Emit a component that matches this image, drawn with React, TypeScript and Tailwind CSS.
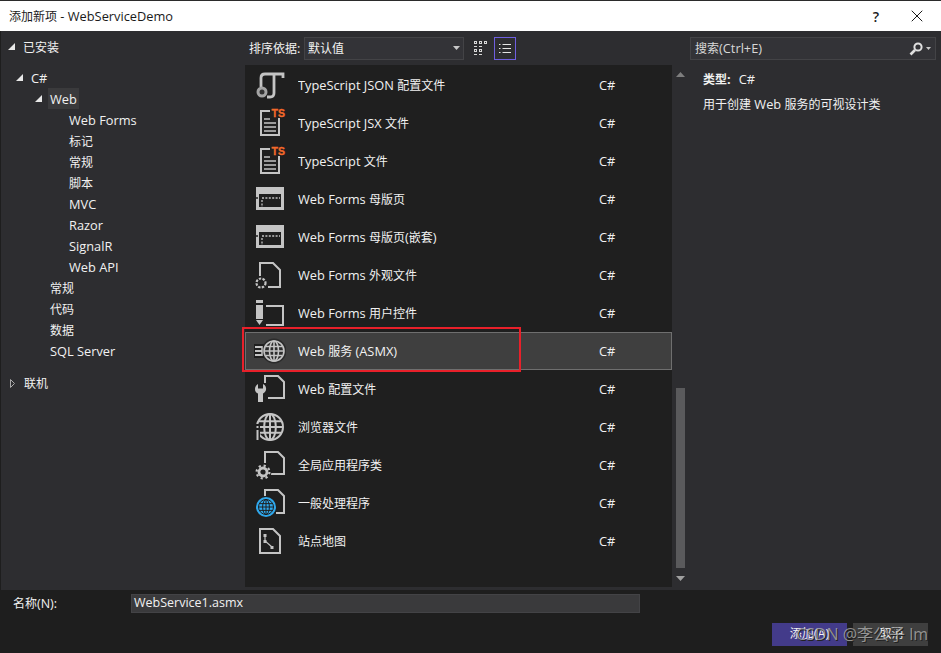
import type { ReactNode } from "react";
import { X } from "lucide-react";

const FONT = "font-['Open_Sans','Noto_Sans_CJK_SC',sans-serif]";
const GRAY = "#c4c4c4";
const BG = "#1f1f1f";

// Latin runs sit a little larger than CJK runs in the original dialog font
function Label({ text }: { text: string }) {
  return (
    <>
      {text.split(/([\u3000-\u9fff]+)/).map((run, i) =>
        /[\u3000-\u9fff]/.test(run) ? (
          <span key={i} className="text-[12px]">
            {run}
          </span>
        ) : (
          <span key={i}>{run}</span>
        ),
      )}
    </>
  );
}

function Icon({ children }: { children: ReactNode }) {
  return (
    <svg width="32" height="38" viewBox="0 0 32 38" fill="none" className="shrink-0">
      {children}
    </svg>
  );
}

function TsDoc() {
  return (
    <Icon>
      <path d="M16 7H7V31H25V14" stroke={GRAY} strokeWidth="2" />
      <path d="M10 15H16M10 19H22M10 23H22M10 27H22" stroke={GRAY} strokeWidth="1.6" />
      <text x="17.500" y="13" fontSize="10.500" fontWeight="700" fill="#f4692a" stroke="#f4692a" strokeWidth="0.300" fontFamily="Liberation Sans, sans-serif">
        TS
      </text>
    </Icon>
  );
}

function MasterPage() {
  return (
    <Icon>
      <rect x="2" y="7" width="28" height="23" fill={GRAY} />
      <rect x="5" y="14" width="22" height="13" fill={BG} />
      <path d="M8 18H26" stroke={GRAY} strokeWidth="1.300" strokeDasharray="2 1.400" />
      <path d="M2 18H6" stroke={BG} strokeWidth="1.300" strokeDasharray="2 1.400" />
      <path d="M8 20V27" stroke={GRAY} strokeWidth="1.300" strokeDasharray="2 1.400" />
    </Icon>
  );
}

function Globe({ cx, cy, r, color = GRAY, sw = 1.6 }: { cx: number; cy: number; r: number; color?: string; sw?: number }) {
  return (
    <g stroke={color} strokeWidth={sw}>
      <circle cx={cx} cy={cy} r={r} />
      <ellipse cx={cx} cy={cy} rx={r * 0.45} ry={r} />
      <path d={`M${cx} ${cy - r}V${cy + r}M${cx - r} ${cy}H${cx + r}M${cx - r * 0.86} ${cy - r * 0.45}H${cx + r * 0.86}M${cx - r * 0.86} ${cy + r * 0.45}H${cx + r * 0.86}`} />
    </g>
  );
}

function Gear({ cx, cy }: { cx: number; cy: number }) {
  return (
    <g>
      <circle cx={cx} cy={cy} r="8.500" fill={BG} />
      <circle cx={cx} cy={cy} r="4" stroke={GRAY} strokeWidth="2.800" />
      <circle cx={cx} cy={cy} r="6.400" stroke={GRAY} strokeWidth="2.200" strokeDasharray="2.200 2.800" />
    </g>
  );
}

const ICONS: Record<string, ReactNode> = {
  json: (
    <Icon>
      <path d="M7 21V12Q7 8 11 8H29V12" stroke={GRAY} strokeWidth="2.800" />
      <path d="M20 8V27Q20 31 16 31H13" stroke={GRAY} strokeWidth="2.800" />
      <circle cx="8" cy="26" r="4" stroke="#a4a4a4" strokeWidth="3" fill="#333" />
    </Icon>
  ),
  ts: <TsDoc />,
  master: <MasterPage />,
  skin: (
    <Icon>
      <path d="M6 20V7H19L26 14V31H14" stroke={GRAY} strokeWidth="2" />
      <circle cx="7" cy="27" r="4.500" stroke={GRAY} strokeWidth="2.200" strokeDasharray="2.400 1.300" />
    </Icon>
  ),
  control: (
    <Icon>
      <path d="M12 12H29V31H12" stroke={GRAY} strokeWidth="2" />
      <rect x="2" y="6" width="7" height="3" fill={GRAY} />
      <rect x="2" y="11" width="7" height="14" fill={GRAY} />
      <path d="M2 26H9L5.500 31Z" fill={GRAY} />
    </Icon>
  ),
  service: (
    <Icon>
      <circle cx="20" cy="19" r="12.500" fill="#2b2b2b" />
      <rect x="0" y="12" width="10" height="14" fill="#1f1f1f" />
      <path d="M1 15H8M1 19H8M1 23H8" stroke={GRAY} strokeWidth="2" />
      <path d="M8 14V24" stroke={GRAY} strokeWidth="1.500" />
      <Globe cx={20} cy={19} r={10} />
    </Icon>
  ),
  config: (
    <Icon>
      <path d="M11 13V6H24L30 12V28H14" stroke={GRAY} strokeWidth="2" />
      <path d="M4 14V18.500H9V14C11.500 15 12.500 17.500 12 20C11.500 22 10 23 9 23.500V32H4V23.500C2.500 23 0.800 21.500 1 19C1 17 2 15 4 14Z" fill={GRAY} />
    </Icon>
  ),
  browser: (
    <Icon>
      <Globe cx={16} cy={19} r={13} sw={2} />
      <rect x="0" y="16" width="6" height="18" fill={BG} />
      <rect x="2.500" y="18" width="2" height="2" fill={GRAY} />
      <rect x="2.500" y="22" width="2" height="10" fill={GRAY} />
    </Icon>
  ),
  gear: (
    <Icon>
      <path d="M11 17V6H24L30 12V28H16" stroke={GRAY} strokeWidth="2" />
      <Gear cx={9} cy={26} />
    </Icon>
  ),
  handler: (
    <Icon>
      <path d="M11 12V6H24L30 12V29H22" stroke={GRAY} strokeWidth="2" />
      <circle cx="12" cy="23" r="11" fill={BG} />
      <circle cx="12" cy="23" r="10" fill="#2fa8ec" />
      <Globe cx={12} cy={23} r={7.500} color={BG} sw={1} />
    </Icon>
  ),
  sitemap: (
    <Icon>
      <path d="M6 7H19L26 14V31H6Z" stroke={GRAY} strokeWidth="2" />
      <path d="M11 13V19L18 25" stroke={GRAY} strokeWidth="1.200" />
      <rect x="9.500" y="12" width="3" height="3" fill={GRAY} />
      <rect x="9.500" y="18" width="3" height="3" fill={GRAY} />
      <rect x="16.500" y="24" width="3" height="3" fill={GRAY} />
    </Icon>
  ),
};

const ITEMS = [
  { icon: "json", name: "TypeScript JSON 配置文件" },
  { icon: "ts", name: "TypeScript JSX 文件" },
  { icon: "ts", name: "TypeScript 文件" },
  { icon: "master", name: "Web Forms 母版页" },
  { icon: "master", name: "Web Forms 母版页(嵌套)" },
  { icon: "skin", name: "Web Forms 外观文件" },
  { icon: "control", name: "Web Forms 用户控件" },
  { icon: "service", name: "Web 服务 (ASMX)", selected: true },
  { icon: "config", name: "Web 配置文件" },
  { icon: "browser", name: "浏览器文件" },
  { icon: "gear", name: "全局应用程序类" },
  { icon: "handler", name: "一般处理程序" },
  { icon: "sitemap", name: "站点地图" },
];

const WEB_CHILDREN = ["Web Forms", "标记", "常规", "脚本", "MVC", "Razor", "SignalR", "Web API"];
const CSHARP_CHILDREN = ["常规", "代码", "数据", "SQL Server"];

function Arrow({ open = true }: { open?: boolean }) {
  return open ? (
    <svg width="7" height="7" viewBox="0 0 7 7" className="shrink-0">
      <path d="M7 0V7H0Z" fill="#e8e8e8" />
    </svg>
  ) : (
    <svg width="5" height="9" viewBox="0 0 5 9" className="shrink-0">
      <path d="M0.500 0.500L4.500 4.500L0.500 8.500Z" stroke="#a8a8a8" fill="none" />
    </svg>
  );
}

function Sidebar() {
  return (
    <div className="flex w-[244px] shrink-0 flex-col pt-[5px] text-[12.8px] text-[#f1f1f1]">
      <div className="flex h-[21px] items-center gap-[8px] pl-[7px]">
        <Arrow />
        <span className="pt-[2px]"><Label text="已安装" /></span>
      </div>
      <div className="mt-[10px] flex h-[21px] items-center gap-[8px] pl-[15px]">
        <Arrow />
        <span className="pt-[2px]">C#</span>
      </div>
      <div className="flex h-[21px] items-center gap-[6px] pl-[34px]">
        <Arrow />
        <span className="flex h-[21px] items-center bg-[#3a3a3c] px-[2px] pt-[2px]">Web</span>
      </div>
      {WEB_CHILDREN.map((label) => (
        <div key={label} className="flex h-[21px] items-center pl-[68px] pt-[2px]">
          <Label text={label} />
        </div>
      ))}
      {CSHARP_CHILDREN.map((label) => (
        <div key={label} className="flex h-[21px] items-center pl-[49px] pt-[2px]">
          <Label text={label} />
        </div>
      ))}
      <div className="mt-[11px] flex h-[21px] items-center gap-[9px] pl-[9px] pt-[2px]">
        <Arrow open={false} />
        <span><Label text="联机" /></span>
      </div>
    </div>
  );
}

function Toolbar() {
  return (
    <div className="flex h-[34px] items-center pl-[4px] text-[12.8px] text-[#f1f1f1]">
      <span className="w-[55px] pt-[2px]"><Label text="排序依据:" /></span>
      <div className="flex h-[23px] w-[160px] items-center justify-between border border-[#434346] bg-[#333337] pl-[3px] pr-[3px]">
        <span className="pt-[2px]"><Label text="默认值" /></span>
        <svg width="7" height="4" viewBox="0 0 7 4">
          <path d="M0 0H7L3.500 4Z" fill="#c8c8c8" />
        </svg>
      </div>
      <svg width="14" height="14" viewBox="0 0 14 14" className="ml-[10px]">
        <g stroke="#d8d8d8" fill="none">
          <rect x="0.500" y="0.500" width="2" height="2" />
          <rect x="5.500" y="0.500" width="2" height="2" />
          <rect x="10.500" y="0.500" width="2" height="2" />
          <rect x="0.500" y="8.500" width="2" height="2" />
          <rect x="5.500" y="8.500" width="2" height="2" />
        </g>
        <path d="M0 5.500H3M5 5.500H8M0 13.500H3M5 13.500H8" stroke="#d8d8d8" />
      </svg>
      <div className="ml-[6px] flex h-[23px] w-[22px] items-center justify-center border border-[#6f5fe0]">
        <svg width="12" height="9" viewBox="0 0 12 9">
          <path d="M0 0.500H1.500M0 4.500H1.500M0 8.500H1.500M3.500 0.500H12M3.500 4.500H12M3.500 8.500H12" stroke="#e4e4e4" />
        </svg>
      </div>
    </div>
  );
}

function TemplateList() {
  return (
    <div className="flex h-[522px]">
      <div className="flex w-[427px] flex-col bg-[#1f1f1f] pt-px text-[12.8px] text-[#f1f1f1]">
        {ITEMS.map((item) => (
          <div
            key={item.name}
            className={`flex h-[38px] shrink-0 items-center pl-[8px] ${item.selected ? "border border-[#6f6f6f] bg-[#3f3f3f]" : "border border-transparent"}`}
          >
            {ICONS[item.icon]}
            <span className="ml-[12px] w-[301px] truncate pt-[2px]"><Label text={item.name} /></span>
            <span className="pt-[2px]">C#</span>
          </div>
        ))}
      </div>
      <div className="flex w-[16px] flex-col items-center bg-[#2d2d30] pt-[7px] pb-[6px]">
        <svg width="9" height="5" viewBox="0 0 9 5">
          <path d="M0 5H9L4.500 0Z" fill="#7e7e7e" />
        </svg>
        <div className="mt-[311px] h-[180px] w-[9px] bg-[#5a5a5c]" />
        <svg width="9" height="5" viewBox="0 0 9 5" className="mt-auto">
          <path d="M0 0H9L4.500 5Z" fill="#a0a0a0" />
        </svg>
      </div>
    </div>
  );
}

function DetailPanel() {
  return (
    <div className="flex flex-1 flex-col pt-[6px] text-[12.8px] text-[#f1f1f1]">
      <div className="flex h-[23px] w-[246px] items-center justify-between border border-[#434346] bg-[#333337] pl-[4px] pr-[4px] text-[#d8d8d8]">
        <span><Label text="搜索(Ctrl+E)" /></span>
        <span className="flex items-center gap-[3px]">
          <svg width="14" height="14" viewBox="0 0 14 14" fill="none">
            <circle cx="9" cy="5" r="3.600" stroke="#e0e0e0" strokeWidth="2" />
            <path d="M6 8L1.500 12.500" stroke="#e0e0e0" strokeWidth="2.600" />
          </svg>
          <svg width="5" height="3" viewBox="0 0 5 3">
            <path d="M0 0H5L2.500 3Z" fill="#c8c8c8" />
          </svg>
        </span>
      </div>
      <div className="mt-[9px] pl-[13px]">
        <div className="flex h-[20px] items-center pt-[2px]">
          <span className="font-bold"><Label text="类型:" /></span>
          <span className="ml-[8px]">C#</span>
        </div>
        <div className="mt-[6px] flex h-[18px] items-center whitespace-pre pt-[2px]">
          <Label text="用于创建 Web 服务的可视设计类" />
        </div>
      </div>
    </div>
  );
}

export default function App() {
  return (
    <div className={`relative flex h-[653px] w-[941px] flex-col overflow-hidden bg-[#1e1e1e] ${FONT}`}>
      <div className="flex h-[31px] shrink-0 items-center border-t border-[#2b2b2b] bg-white pl-[9px] text-[12.8px] text-[#1a1a1a]">
        <span className="pt-[2px] whitespace-pre"><Label text="添加新项 - WebServiceDemo" /></span>
        <span className="ml-auto text-[14px] font-semibold">?</span>
        <X size={20} strokeWidth={1.200} className="ml-[28px] mr-[14px]" />
      </div>
      <div className="flex h-[559px] shrink-0 border-l border-[#1e1e1e] bg-[#2d2d30]">
        <Sidebar />
        <div className="flex w-[445px] shrink-0 flex-col">
          <Toolbar />
          <TemplateList />
        </div>
        <DetailPanel />
      </div>
      <div className="flex h-[26px] shrink-0 items-center pl-[13px] text-[12.5px] text-[#f1f1f1]">
        <span className="w-[118px] pt-[2px]"><Label text="名称(N):" /></span>
        <div className="flex h-[19px] w-[509px] items-center border border-[#434346] bg-[#3a3a3c] pl-[2px]">WebService1.asmx</div>
      </div>
      <div className="flex flex-1 items-start justify-end gap-[6px] pt-[7px] pr-[13px] text-[12.5px] text-[#f1f1f1]">
        <button className="h-[23px] w-[75px] bg-[#433b8a]"><Label text="添加(A)" /></button>
        <button className="h-[23px] w-[75px] bg-[#3f3f3f] pl-[2px]"><Label text="取消" /></button>
      </div>
      {/* red annotation and watermark sit over the dialog */}
      <div className="absolute left-[242px] top-[327px] h-[45px] w-[279px] border-2 border-[#e8202a]" />
      <div className="absolute left-[796px] top-[622px] text-[16px] leading-[24px] text-[#b4b4b4]/75 [text-shadow:1px_1px_0_#222]">
        CSDN @李公子 lm
      </div>
    </div>
  );
}
